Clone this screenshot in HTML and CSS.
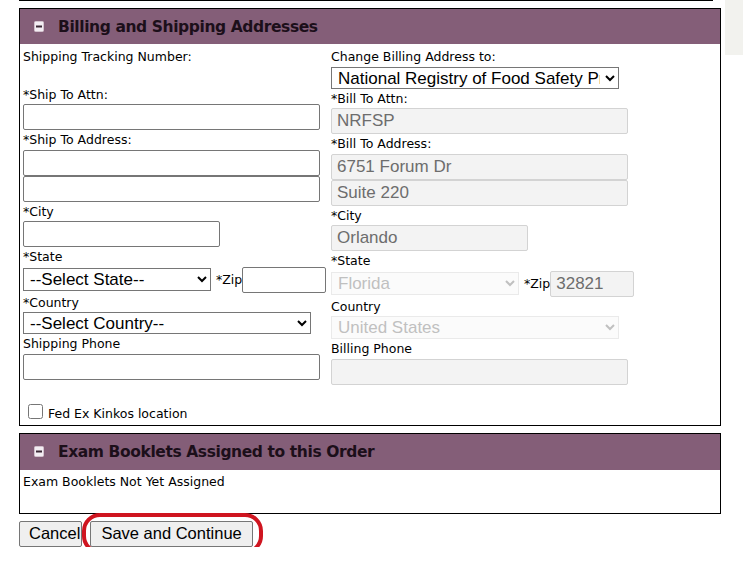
FILE: index.html
```html
<!DOCTYPE html>
<html lang="en">
<head>
<meta charset="utf-8">
<title>Billing and Shipping Addresses</title>
<link rel="stylesheet" href="styles.css">
</head>
<body>
<div class="page">
  <main class="main">
    <div class="topline"></div>

    <section class="panel">
      <header class="panel-head">
        <svg class="toggle" width="10" height="11" viewBox="0 0 10 11" aria-hidden="true"><rect x="0.5" y="0.5" width="9" height="10" rx="1" fill="#f3edf3" stroke="#d2c2cd"/><rect x="2" y="4.5" width="6" height="2" fill="#3a2835"/></svg>
        <h2 class="panel-title">Billing and Shipping Addresses</h2>
      </header>

      <div class="addr-grid">
        <div class="col">
          <div class="lbl">Shipping Tracking Number:</div>
          <div class="val"></div>
          <div class="lbl">*Ship To Attn:</div>
          <input class="txt w-wide" type="text">
          <div class="lbl">*Ship To Address:</div>
          <input class="txt w-wide" type="text">
          <input class="txt w-wide" type="text">
          <div class="lbl">*City</div>
          <input class="txt w-city" type="text">
          <div class="lbl">*State</div>
          <div class="row">
            <select class="sel w-state"><option>--Select State--</option></select>
            <span class="zip-lbl">*Zip</span>
            <input class="txt w-zip" type="text">
          </div>
          <div class="lbl">*Country</div>
          <select class="sel w-sel sel-short"><option>--Select Country--</option></select>
          <div class="lbl">Shipping Phone</div>
          <input class="txt w-wide" type="text">
        </div>

        <div class="col">
          <div class="lbl">Change Billing Address to:</div>
          <select class="sel w-sel sel-short"><option>National Registry of Food Safety Professionals</option></select>
          <div class="lbl">*Bill To Attn:</div>
          <input class="txt w-wide" type="text" value="NRFSP" disabled>
          <div class="lbl">*Bill To Address:</div>
          <input class="txt w-wide" type="text" value="6751 Forum Dr" disabled>
          <input class="txt w-wide" type="text" value="Suite 220" disabled>
          <div class="lbl">*City</div>
          <input class="txt w-city" type="text" value="Orlando" disabled>
          <div class="lbl">*State</div>
          <div class="row">
            <select class="sel w-state" disabled><option>Florida</option></select>
            <span class="zip-lbl">*Zip</span>
            <input class="txt w-zip" type="text" value="32821" disabled>
          </div>
          <div class="lbl">Country</div>
          <select class="sel w-sel" disabled><option>United States</option></select>
          <div class="lbl">Billing Phone</div>
          <input class="txt w-wide" type="text" disabled>
        </div>
      </div>

      <label class="check-row"><input class="chk" type="checkbox"><span class="check-text">Fed Ex Kinkos location</span></label>
    </section>

    <section class="panel panel-exam">
      <header class="panel-head panel-head-tall">
        <svg class="toggle" width="10" height="11" viewBox="0 0 10 11" aria-hidden="true"><rect x="0.5" y="0.5" width="9" height="10" rx="1" fill="#f3edf3" stroke="#d2c2cd"/><rect x="2" y="4.5" width="6" height="2" fill="#3a2835"/></svg>
        <h2 class="panel-title">Exam Booklets Assigned to this Order</h2>
      </header>
      <div class="exam-body">Exam Booklets Not Yet Assigned</div>
    </section>

    <div class="actions">
      <button class="btn btn-cancel" type="button">Cancel</button>
      <span class="highlight"><button class="btn btn-save" type="button">Save and Continue</button></span>
    </div>
  </main>
  <aside class="side"></aside>
</div>
</body>
</html>
```

FILE: styles.css
```css
html, body {
  margin: 0;
  padding: 0;
  background: #ffffff;
}

body {
  font-family: "DejaVu Sans", Verdana, sans-serif;
  font-size: 12.5px;
  color: #000;
}

.page {
  display: flex;
  align-items: flex-start;
  gap: 4px;
  padding-left: 19px;
}

.main {
  width: 702px;
}

.side {
  width: 18px;
  height: 55px;
  background: #f2f2ee;
}

.topline {
  width: 694px;
  border-top: 1px solid #000;
}

.panel {
  border: 1px solid #000;
  margin-top: 7px;
}

.panel-exam {
  margin-top: 7px;
}

.panel-head {
  height: 35px;
  background: #845e78;
  display: flex;
  align-items: center;
  padding-left: 14px;
  gap: 14px;
}

.panel-head-tall {
  height: 36px;
}

.toggle {
  display: block;
  flex: none;
  margin-top: -1px;
}

.panel-title {
  margin: 0;
  font-family: "DejaVu Sans", Verdana, sans-serif;
  font-weight: bold;
  font-size: 15.5px;
  letter-spacing: -0.4px;
  color: #1c0f1a;
}

.addr-grid {
  display: grid;
  grid-template-columns: 308px 1fr;
  padding: 3px 0 0 3px;
}

.lbl {
  height: 19.5px;
  line-height: 19.5px;
  white-space: nowrap;
}

.val {
  height: 18px;
}

.txt {
  display: block;
  box-sizing: border-box;
  height: 26px;
  margin: 0;
  padding: 0 5px;
  border: 1px solid #767676;
  border-radius: 2px;
  background: #fff;
  font-family: "Liberation Sans", Arial, sans-serif;
  font-size: 17px;
  color: #000;
}

.txt:disabled {
  background: #f3f3f3;
  border-color: #d3d3d3;
  color: #6d6d6d;
}

.w-wide { width: 297px; }
.w-city { width: 197px; }
.w-zip { width: 84px; }
.w-state { width: 188px; }
.w-sel { width: 288px; }

.sel {
  display: block;
  box-sizing: border-box;
  height: 23px;
  margin: 0;
  padding: 0 2px;
  border: 1px solid #767676;
  border-radius: 0;
  background-color: #fff;
  font-family: "Liberation Sans", Arial, sans-serif;
  font-size: 17px;
  color: #000;
}

.sel-short {
  height: 22px;
}

.sel:disabled {
  background-color: #fafafa;
  border-color: #e2e2e2;
  color: #a6a6a6;
}

.row {
  display: flex;
  align-items: center;
  height: 26px;
}

.zip-lbl {
  margin-left: 5px;
}

.check-row {
  display: flex;
  align-items: flex-end;
  gap: 5px;
  padding: 19px 0 2px 8px;
}

.chk {
  width: 15px;
  height: 15px;
  margin: 0 0 4px 0;
}

.check-text {
  line-height: 19px;
}

.exam-body {
  box-sizing: border-box;
  height: 43px;
  padding: 2px 3px 0;
  line-height: 19.5px;
}

.actions {
  display: flex;
  gap: 8px;
  margin-top: 7px;
}

.btn {
  box-sizing: border-box;
  height: 26px;
  margin: 0;
  padding: 0 10px;
  border: 1px solid #767676;
  border-radius: 2px;
  background: #efefef;
  font-family: "Liberation Sans", Arial, sans-serif;
  font-size: 16.5px;
  color: #000;
}

.btn-cancel {
  padding: 0 1px 0 9px;
}

.highlight {
  position: relative;
  display: block;
}

.highlight::before {
  content: "";
  position: absolute;
  left: -8px;
  top: -8px;
  right: -10px;
  bottom: -7px;
  border: 4px solid #cf1520;
  border-radius: 18px;
  pointer-events: none;
  z-index: 1;
}
```
